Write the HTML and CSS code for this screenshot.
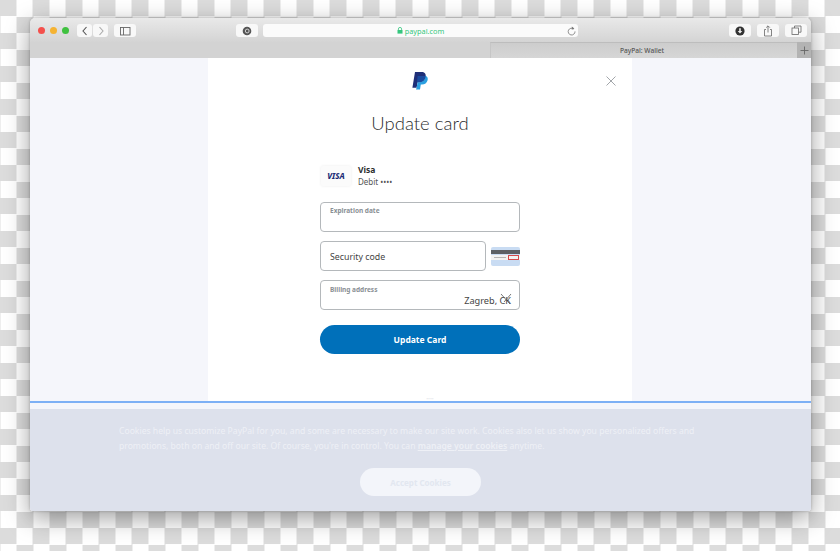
FILE: index.html
```html
<!DOCTYPE html>
<html lang="en">
<head>
    <meta charset="UTF-8">
    <meta name="viewport" content="width=device-width, initial-scale=1.0">
    <title>PayPal: Wallet</title>
    <link rel="stylesheet" href="styles.css">
</head>
<body>
    <div class="window">
        <!--barra do navegador-->
        <div class="toolbar">
            <div class="lights">
                <span class="light light-red"></span>
                <span class="light light-yellow"></span>
                <span class="light light-green"></span>
            </div>
            <div class="nav-group">
                <span class="tool tool-nav">
                    <svg width="8" height="10" viewBox="0 0 8 10"><path d="M5.5 1 L2 5 L5.5 9" fill="none" stroke="#555" stroke-width="1.1"/></svg>
                </span>
                <span class="tool tool-nav">
                    <svg width="8" height="10" viewBox="0 0 8 10"><path d="M2.5 1 L6 5 L2.5 9" fill="none" stroke="#aaa" stroke-width="1.1"/></svg>
                </span>
            </div>
            <span class="tool tool-side">
                <svg width="12" height="10" viewBox="0 0 12 10"><rect x="1.5" y="1.5" width="9.5" height="7.5" fill="none" stroke="#666" stroke-width="0.9"/><path d="M4.5 1.5 V9" stroke="#666" stroke-width="0.9"/></svg>
            </span>
            <span class="tool tool-g">
                <svg width="10" height="10" viewBox="0 0 10 10"><circle cx="5" cy="5" r="4.3" fill="#555"/><circle cx="5.2" cy="5" r="1.9" fill="none" stroke="#ddd" stroke-width="0.9"/></svg>
            </span>
            <div class="urlbar">
                <span class="url">
                    <svg width="6" height="7" viewBox="0 0 6 7"><path d="M1.4 3 V2 a1.6 1.6 0 0 1 3.2 0 V3" fill="none" stroke="#35c77e" stroke-width="0.8"/><rect x="0.5" y="3" width="5" height="3.6" fill="#35c77e"/></svg>
                    paypal.com
                </span>
                <svg class="reload" width="9" height="10" viewBox="0 0 9 10"><path d="M6.8 3 A3.4 3.4 0 1 0 8 5.4" fill="none" stroke="#777" stroke-width="0.8"/><path d="M4.8 0.6 L7.4 2.6 L4.8 3.8 Z" fill="#777"/></svg>
            </div>
            <span class="tool tool-right">
                <svg width="10" height="10" viewBox="0 0 10 10"><circle cx="5" cy="5" r="4.6" fill="#333"/><path d="M4.2 2.2 H5.8 V5 H7.3 L5 7.6 L2.7 5 H4.2 Z" fill="#eee"/></svg>
            </span>
            <span class="tool tool-right">
                <svg width="10" height="12" viewBox="0 0 10 12"><path d="M3 4.5 H1.5 V11 H8.5 V4.5 H7 M5 7.5 V1 M3.2 2.6 L5 0.8 L6.8 2.6" fill="none" stroke="#666" stroke-width="0.8"/></svg>
            </span>
            <span class="tool tool-right">
                <svg width="11" height="11" viewBox="0 0 11 11"><rect x="1" y="3" width="6.5" height="6.5" fill="none" stroke="#666" stroke-width="0.8"/><path d="M3.5 3 V1 H10 V7.2 H7.5" fill="none" stroke="#666" stroke-width="0.8"/></svg>
            </span>
        </div>

        <!--abas-->
        <div class="tabbar">
            <div class="tab">PayPal: Wallet</div>
            <div class="tab-new">
                <svg width="9" height="9" viewBox="0 0 9 9"><path d="M4.5 0.5 V8.5 M0.5 4.5 H8.5" stroke="#666" stroke-width="0.9"/></svg>
            </div>
        </div>

        <!--conteudo da pagina-->
        <div class="page">
            <div class="modal">
                <svg class="close" width="10" height="10" viewBox="0 0 10 10"><path d="M0.5 0.5 L9.5 9.5 M9.5 0.5 L0.5 9.5" stroke="#8a8f94" stroke-width="0.8"/></svg>
                <svg class="logo" width="16" height="18" viewBox="0 0 16 18">
                    <path d="M3 0 H9.4 C12.6 0 14.2 1.9 13.7 4.8 C13.1 8.3 10.6 10.2 7.4 10.2 H5.6 L4.6 15.8 H0.4 Z" fill="#1f2f78"/>
                    <path d="M5.6 4 H13.9 C15.8 4.8 16 6.6 15.6 8.2 C14.9 11 12.8 12.6 10 12.6 H8.8 L8 17.6 H4 L4.6 15.8 L5.6 10.2 H7.4 C10.6 10.2 12.6 8.4 13.2 5.6 C11.8 4.4 9.5 4 5.6 4 Z" fill="#2a9fe0"/>
                    <path d="M5.6 4 H13.7 C13.4 7.6 10.8 10.2 7.4 10.2 H5 Z" fill="#1b4a9e"/>
                </svg>
                <h1 class="title">Update card</h1>
                <div class="form">
                    <div class="card-row">
                        <div class="card-thumb">VISA</div>
                        <div class="card-info">
                            <div class="card-name">Visa</div>
                            <div class="card-type">Debit ••••</div>
                        </div>
                    </div>
                    <div class="field">
                        <span class="field-label field-label-exp">Expiration date</span>
                    </div>
                    <div class="field-row">
                        <div class="field field-code">Security code</div>
                        <div class="cvv">
                            <div class="cvv-strip"></div>
                            <div class="cvv-digits"><span class="cvv-nums"></span><span class="cvv-box"></span></div>
                        </div>
                    </div>
                    <div class="field">
                        <span class="field-label">Billing address</span>
                        <span class="field-value">Zagreb, CK</span>
                        <svg class="field-x" width="12" height="12" viewBox="0 0 12 12"><path d="M1 1 L10 11 M11 1 L4 9" stroke="#555" stroke-width="0.8"/></svg>
                    </div>
                    <div class="submit">Update Card</div>
                </div>
                <div class="modal-foot">••••</div>
            </div>
        </div>

        <!--aviso de cookies-->
        <div class="progress"></div>
        <div class="strip"></div>
        <div class="cookies">
            <p class="cookies-text">Cookies help us customize PayPal for you, and some are necessary to make our site work. Cookies also let us show you personalized offers and<br>promotions, both on and off our site. Of course, you're in control. You can <a class="cookies-link">manage your cookies</a> anytime.</p>
            <div class="accept">Accept Cookies</div>
        </div>
    </div>
</body>
</html>
```

FILE: styles.css
```css
* {
    box-sizing: border-box;
}

html, body {
    height: 100%;
}

body {
    margin: 0;
    padding: 18px 29px 40px 30px;
    overflow: hidden;
    font-family: "Noto Sans", Arial, sans-serif;
    background-color: #fff;
    background-image: conic-gradient(#dcdcdc 25%, #fff 25% 50%, #dcdcdc 50% 75%, #fff 75%);
    background-size: 33px 33px;
    background-position: 16.5px 0;
}

.window {
    height: 493px;
    display: flex;
    flex-direction: column;
    border-radius: 5px 5px 3px 3px;
    overflow: hidden;
    box-shadow: 0 7px 24px rgba(0, 0, 0, .38), 0 0 3px rgba(0, 0, 0, .25);
}

.toolbar {
    height: 24px;
    flex: none;
    display: flex;
    align-items: center;
    padding: 1px 5px 0 8px;
    background: linear-gradient(#e9e9e9, #d4d4d4);
}

.lights {
    display: flex;
    gap: 5px;
    width: 39px;
    flex: none;
}

.light {
    width: 7px;
    height: 7px;
    border-radius: 50%;
}

.light-red { background-color: #f4504c; }
.light-yellow { background-color: #f5b332; }
.light-green { background-color: #3fc13f; }

.nav-group {
    display: flex;
    gap: 1px;
    margin-right: 6px;
    flex: none;
}

.tool {
    height: 13px;
    flex: none;
    display: flex;
    align-items: center;
    justify-content: center;
    border-radius: 3px;
    background-color: #f8f8f8;
}

.tool-nav { width: 15px; }
.tool-side { width: 22px; margin-right: 100px; }
.tool-g { width: 22px; margin-right: 5px; }
.tool-right { width: 22px; margin-left: 6px; }

.urlbar {
    width: 315px;
    height: 13px;
    flex: none;
    margin-right: 145px;
    position: relative;
    display: flex;
    align-items: center;
    justify-content: center;
    border-radius: 3px;
    background-color: #fbfbfb;
}

.url {
    display: flex;
    align-items: center;
    gap: 2px;
    font-size: 7.3px;
    color: #35c77e;
}

.reload {
    position: absolute;
    right: 2px;
    top: 2px;
}

.tabbar {
    height: 16px;
    flex: none;
    display: flex;
    justify-content: flex-end;
    background-color: #d3d3d3;
}

.tab {
    width: 307px;
    display: flex;
    align-items: center;
    justify-content: center;
    padding-right: 4px;
    font-size: 6.6px;
    font-weight: 500;
    color: #555;
    border-top: 1px solid #bdbdbd;
    border-left: 1px solid #c6c6c6;
    background: linear-gradient(#cdcdcd, #d6d6d6);
}

.tab-new {
    width: 14px;
    display: flex;
    align-items: center;
    justify-content: center;
    background-color: #b3b3b3;
}

.page {
    height: 343px;
    flex: none;
    display: flex;
    padding-left: 178px;
    background-color: #f5f6fb;
}

.modal {
    width: 424px;
    position: relative;
    display: flex;
    flex-direction: column;
    align-items: center;
    padding-top: 14px;
    background-color: #fff;
}

.close {
    position: absolute;
    top: 18px;
    right: 16px;
}

.logo {
    display: block;
}

.title {
    margin: 20px 0 0 0;
    font-family: Lato, Arial, sans-serif;
    font-size: 18.5px;
    line-height: 26px;
    font-weight: 300;
    color: #2c2e2f;
}

.form {
    width: 200px;
    margin-top: 28px;
}

.card-row {
    display: flex;
    align-items: center;
    gap: 7px;
    margin-bottom: 15px;
    padding-left: 1px;
}

.card-thumb {
    width: 30px;
    height: 20px;
    display: flex;
    align-items: center;
    justify-content: center;
    font-size: 8px;
    font-weight: 800;
    font-style: italic;
    color: #1f2f78;
    border-radius: 2px;
    background-color: #fbfbfb;
    box-shadow: 0 0 3px rgba(0, 0, 0, .08);
}

.card-name {
    font-size: 8.5px;
    line-height: 12px;
    font-weight: 700;
    color: #2c2e2f;
}

.card-type {
    font-size: 8px;
    line-height: 11px;
    color: #555;
}

.field {
    height: 30px;
    position: relative;
    margin-bottom: 9px;
    border: 1px solid #b4b8bb;
    border-radius: 4px;
    background-color: #fff;
}

.field-label {
    position: absolute;
    left: 9px;
    top: 4px;
    font-size: 6.5px;
    font-weight: 700;
    color: #8a8f94;
}

.field-label-exp {
    top: 3px;
}

.field-value {
    position: absolute;
    right: 8px;
    top: 13px;
    font-size: 9.2px;
    color: #444;
}

.field-x {
    position: absolute;
    right: 7px;
    top: 12px;
}

.field-row {
    display: flex;
    align-items: center;
    gap: 4px;
    margin-bottom: 9px;
}

.field-code {
    width: 166px;
    flex: none;
    margin-bottom: 0;
    display: flex;
    align-items: center;
    padding: 1px 0 0 9px;
    font-size: 8.8px;
    color: #444;
}

.cvv {
    width: 29px;
    height: 19px;
    margin-left: 1px;
    border-radius: 2px;
    padding-top: 3px;
    background-color: #c9dcf3;
}

.cvv-strip {
    height: 4px;
    background-color: #5c6065;
}

.cvv-digits {
    height: 5px;
    margin-top: 1px;
    display: flex;
    justify-content: space-between;
    padding: 0 1px 0 3px;
    background-color: #f3f3f3;
}

.cvv-nums {
    width: 12px;
    height: 1px;
    margin-top: 2px;
    background-color: #b5b5b5;
}

.cvv-box {
    width: 11px;
    border: 1px solid #d64a4a;
}

.submit {
    height: 29px;
    margin-top: 15px;
    display: flex;
    align-items: center;
    justify-content: center;
    font-size: 8.5px;
    font-weight: 700;
    color: #fff;
    border-radius: 15px;
    background-color: #0070ba;
}

.modal-foot {
    margin-top: auto;
    height: 4px;
    line-height: 4px;
    font-size: 5px;
    color: #e6e8ec;
    padding-left: 20px;
}

.progress {
    height: 2px;
    flex: none;
    background-color: #7db0f5;
}

.strip {
    height: 6px;
    flex: none;
    background-color: #f5f6fb;
}

.cookies {
    flex: 1;
    padding: 15px 0 0 89px;
    background-color: #dde1ec;
}

.cookies-text {
    margin: 0;
    font-size: 8.6px;
    line-height: 14.5px;
    color: #eef0f6;
    white-space: nowrap;
}

.cookies-link {
    font-weight: 600;
    text-decoration: underline;
}

.accept {
    width: 121px;
    height: 28px;
    margin: 15px 0 0 241px;
    display: flex;
    align-items: center;
    justify-content: center;
    font-size: 8px;
    font-weight: 700;
    color: #e2e7f0;
    border-radius: 14px;
    background-color: #f3f5fa;
}
```
